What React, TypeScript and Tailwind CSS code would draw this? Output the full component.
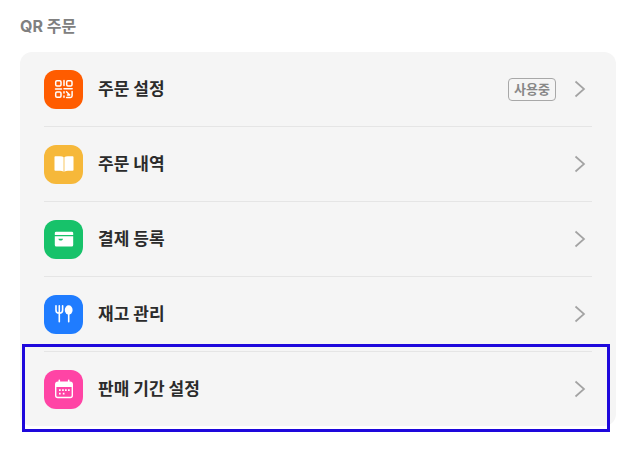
import React from 'react';

const QrIcon = () => (
  <svg className="w-5 h-5" viewBox="0 0 20 20" fill="none" stroke="currentColor" strokeWidth="1.5" strokeLinecap="round" strokeLinejoin="round">
    <rect x="1.7" y="1.7" width="5.3" height="5.3" rx="1.2" />
    <rect x="12.7" y="1.7" width="5.3" height="5.3" rx="1.2" />
    <rect x="1.7" y="13" width="5.3" height="5.3" rx="1.2" />
    <path d="M10 1.5v5M1.5 10h6M10 9.8h8.2M10 12.7v1.2M10 17v1.3M12.5 12.8l3.2 3.2h-2.2M12.6 18.4h3.9q1.6 0 1.6-1.6v-4.2" />
  </svg>
);

const BookIcon = () => (
  <svg className="w-5 h-5" viewBox="0 0 20 20" fill="currentColor">
    <path d="M.5 3q0-.8.8-.8h4.900q2.400 0 3.400 1.100v14.500q-1.300-1.100-3.600-1.100H1.300q-.8 0-.8-.8z" />
    <path d="M19.500 3q0-.8-.8-.8h-4.900q-2.400 0-3.400 1.100v14.500q1.300-1.100 3.600-1.100h4.700q.8 0 .8-.8z" />
  </svg>
);

const CardIcon = () => (
  <svg className="w-5 h-5" viewBox="0 0 20 20" fill="currentColor">
    <path d="M2.2 2.7h15.6q1.4 0 1.4 1.4v1.8H.8V4.1q0-1.4 1.4-1.4z" />
    <path fillRule="evenodd" d="M.8 7.2h18.4v8.7q0 1.5-1.5 1.5H2.3q-1.5 0-1.5-1.5zM4.3 9.8q.5 1.6 1.6 1.6h1.6q1.1 0 1.6-1.6z" />
  </svg>
);

const ForkIcon = () => (
  <svg className="w-5 h-5" viewBox="0 0 20 20" fill="none" stroke="currentColor" strokeWidth="1.6" strokeLinecap="round">
    <path d="M2 1.8v4.4q0 3 3.3 3t3.3-3V1.8M5.3 1.8v16M14.7 9v8.8" />
    <ellipse cx="14.7" cy="6" rx="3.9" ry="4.7" fill="currentColor" stroke="none" />
  </svg>
);

const CalendarIcon = () => (
  <svg className="w-5 h-5" viewBox="0 0 20 20" fill="currentColor">
    <path d="M5.3.4q.8 0 .8.8v1.2h7.8V1.2q0-.8.8-.8t.8.8v1.2H16q3 0 3 3v2.5H1V5.4q0-3 3-3h.5V1.2q0-.8.8-.8z" />
    <path d="M1.7 7.5v9q0 2 2 2h12.6q2 0 2-2v-9" fill="none" stroke="currentColor" strokeWidth="1.4" />
    <path d="M5 10.3h1.7V12H5zM8.1 10.3h1.7V12H8.1zM11 10.3h1.7V12H11zM14 10.3h1.7V12H14zM5 13.8h1.7v1.7H5zM8.8 13.8h1.7v1.7H8.8z" />
  </svg>
);

const menus = [
  { id: 1, label: '주문 설정', color: 'bg-[#ff5c00]', icon: <QrIcon />, status: '사용중' },
  { id: 2, label: '주문 내역', color: 'bg-[#f6b83a]', icon: <BookIcon /> },
  { id: 3, label: '결제 등록', color: 'bg-[#17c26a]', icon: <CardIcon /> },
  { id: 4, label: '재고 관리', color: 'bg-[#1f7cff]', icon: <ForkIcon /> },
  { id: 5, label: '판매 기간 설정', color: 'bg-[#ff44a5]', icon: <CalendarIcon />, selected: true },
];

const MenuRow = ({ menu }) => (
  <li className="relative border-b border-[#e5e5e5] last:border-b-0">
    <a href="#" className="flex items-center h-[74px] pr-[6px]">
      <span className={`flex items-center justify-center w-[39px] h-[39px] rounded-xl text-white ${menu.color}`}>
        {menu.icon}
      </span>
      <span className="ml-[15px] flex-1 text-[17px] leading-6 font-bold text-[#2b2b2b]">{menu.label}</span>
      {menu.status && (
        <span className="mr-[18px] px-[5px] rounded border border-[#a8a8a8] text-[13px] leading-[21px] font-bold text-[#888888]">
          {menu.status}
        </span>
      )}
      <svg className="w-3 h-[18px] text-[#a3a3a3]" viewBox="0 0 12 18" fill="none" stroke="currentColor" strokeWidth="1.7">
        <path d="M1.5 1.5L10 9l-8.5 7.5" />
      </svg>
    </a>
    {menu.selected && (
      <div className="absolute -top-2 -bottom-[6px] -left-[22px] -right-[18px] border-[3px] border-[#1e08dc] pointer-events-none"></div>
    )}
  </li>
);

const App = () => {
  return (
    <main className="min-h-screen bg-white pt-[14px] pb-6 pl-5 pr-[22px] font-['Inter','Noto_Sans_CJK_KR',sans-serif]">
      <h2 className="mb-[14px] text-base leading-6 font-bold text-[#808080]">QR 주문</h2>
      <ul className="px-6 rounded-xl bg-[#f5f5f5]">
        {menus.map(menu => (
          <MenuRow key={menu.id} menu={menu} />
        ))}
      </ul>
    </main>
  );
};

export default App;
